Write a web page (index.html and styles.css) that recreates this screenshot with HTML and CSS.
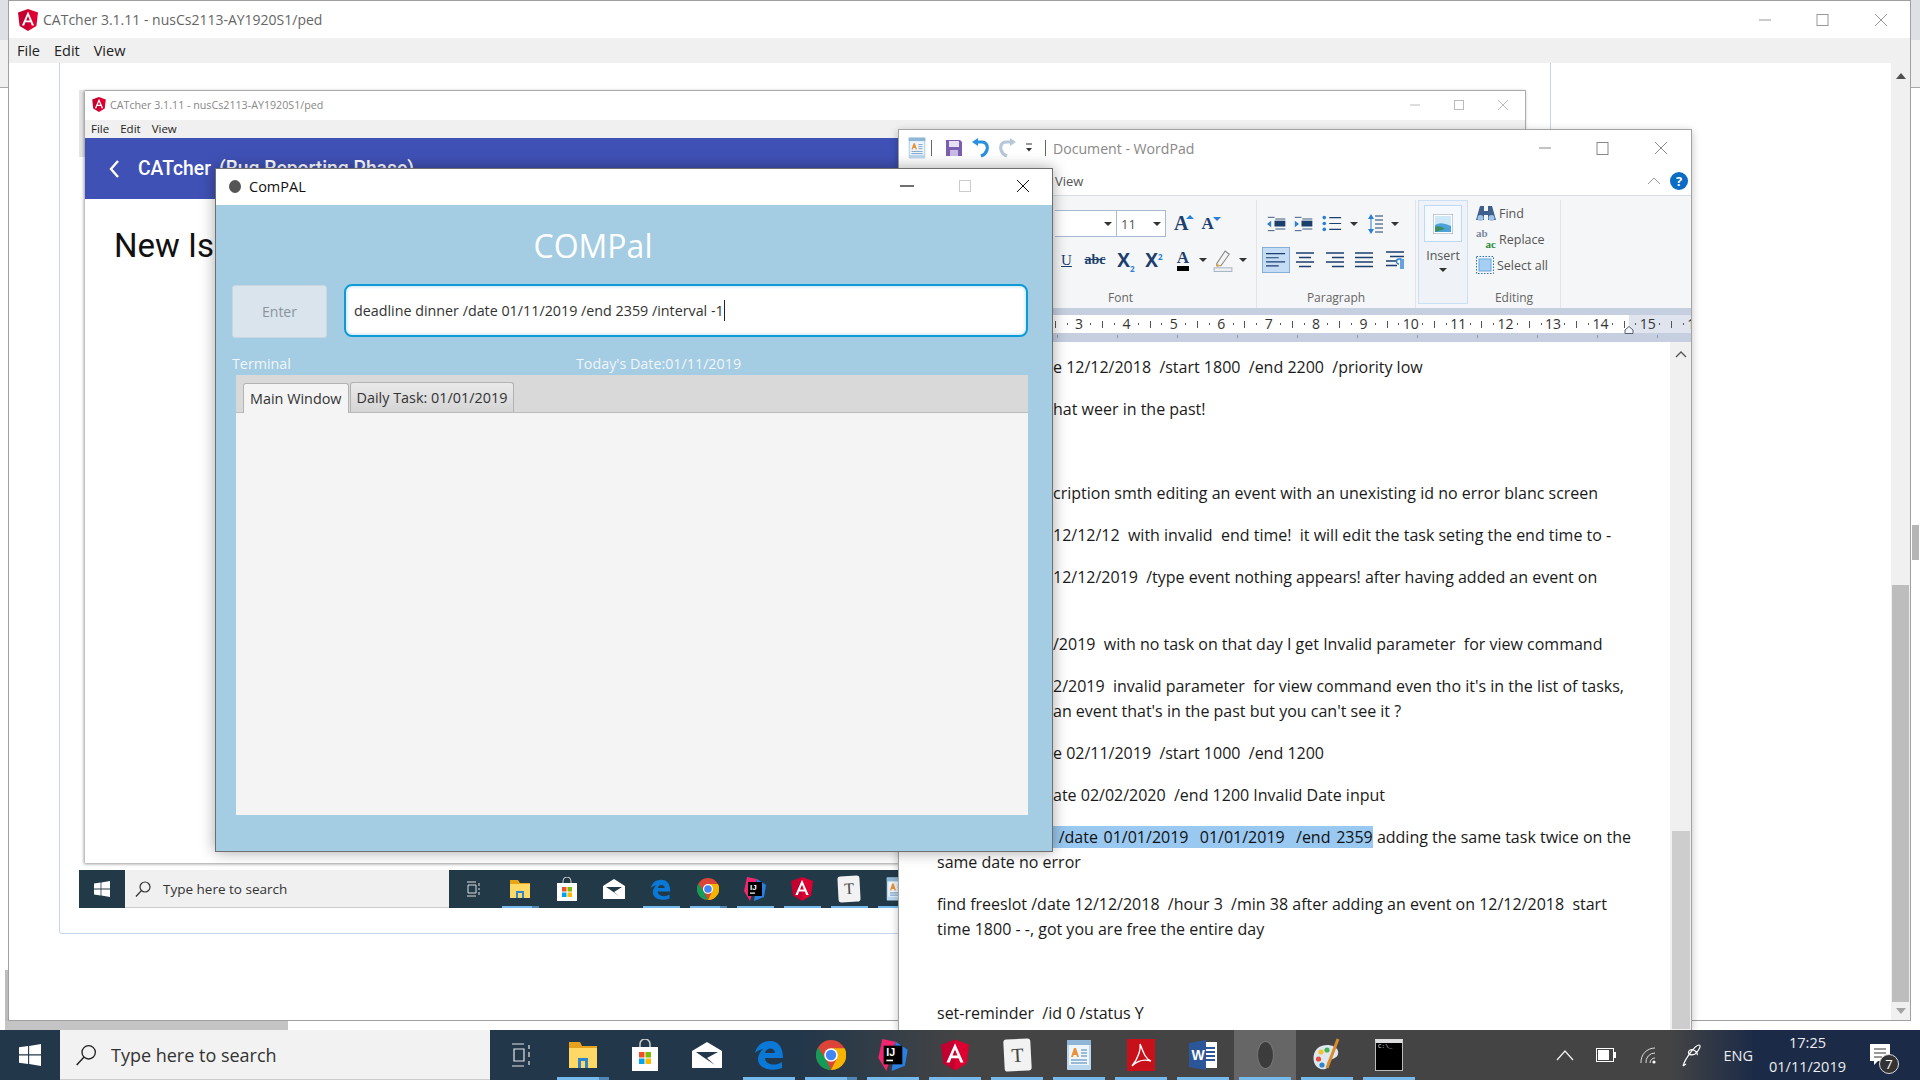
FILE: index.html
```html
<!DOCTYPE html>
<html lang="en">

<head>
    <meta charset="UTF-8">
    <title>CATcher - ComPAL - WordPad</title>
    <link rel="stylesheet" href="styles.css">
</head>

<body>
    <svg class="defs" width="0" height="0">
        <symbol id="ng" viewBox="0 0 20 22">
            <path fill="#dd0031" d="M10 0 L20 3.6 L18.4 17 L10 22 Z" />
            <path fill="#c3002f" d="M10 0 L0 3.6 L1.6 17 L10 22 Z" />
            <path fill="#fff" d="M10 2.6 L3.9 16.4 H6.2 L7.4 13.3 H12.6 L13.8 16.4 H16.1 Z M8.2 11.4 L10 7.1 L11.8 11.4 Z" />
        </symbol>
        <symbol id="wp" viewBox="0 0 26 30">
            <rect x="1" y="0" width="24" height="30" rx="1" fill="#bcd8ee" />
            <rect x="3" y="5" width="20" height="20" fill="#eef5fb" />
            <rect x="1" y="0" width="24" height="5" fill="#8fb6d6" />
            <path fill="#e8923a" d="M5 17 L8 8 H10 L13 17 H11 L10.4 15 H7.6 L7 17 Z" />
            <path stroke="#7fa8cc" stroke-width="1.4" d="M15 10 H21 M15 13 H21 M15 16 H21 M5 20 H21 M5 23 H21" />
        </symbol>
        <symbol id="edge" viewBox="0 0 30 30">
            <path fill="#0a78d7" fill-rule="evenodd" d="M1 13 C3 5 9 1 16 1 C25 1 29 8 29 18 H11 C11 24 20 27 28 22 V28 C18 32 4 29 4 19 C4 15 6 12 9 9 C5 10 3 11 1 13 Z M11 13 H21 C21 7 12 7 11 13 Z" />
        </symbol>
    </svg>

    <!-- big catcher window at the back -->
    <div class="back-strip"></div>
    <div class="far-thumb"></div>
    <div class="left-shade"></div>
    <div class="app-win">
        <div class="titlebar">
            <svg class="ng-big" width="20" height="22"><use href="#ng" /></svg>
            <span class="title-text">CATcher 3.1.11 - nusCs2113-AY1920S1/ped</span>
            <div class="win-btns">
                <svg width="36" height="20" viewBox="0 0 36 20"><path d="M12 10 H24" stroke="#999" stroke-width="1" /></svg>
                <svg width="36" height="20" viewBox="0 0 36 20"><rect x="12" y="4.5" width="11" height="11" fill="none" stroke="#999" /></svg>
                <svg width="36" height="20" viewBox="0 0 36 20"><path d="M12 4 L24 16 M24 4 L12 16" stroke="#999" /></svg>
            </div>
        </div>
        <div class="menubar">
            <span>File</span><span>Edit</span><span>View</span>
        </div>
        <div class="app-body">
            <div class="page-scroll">
                <div class="arrow-up"></div>
                <div class="page-thumb"></div>
                <div class="arrow-down"></div>
            </div>
        </div>
    </div>
    <div class="h-strip"></div>

    <div class="card"></div>

    <!-- screenshot of catcher pasted in the page -->
    <div class="inner-side"></div>
    <div class="inner-win">
        <div class="inner-title">
            <svg width="14" height="15"><use href="#ng" /></svg>
            <span>CATcher 3.1.11 - nusCs2113-AY1920S1/ped</span>
            <div class="inner-btns">
                <svg width="12" height="12" viewBox="0 0 12 12"><path d="M1 6 H11" stroke="#bbb" /></svg>
                <svg width="12" height="12" viewBox="0 0 12 12"><rect x="1.5" y="1.5" width="9" height="9" fill="none" stroke="#bbb" /></svg>
                <svg width="12" height="12" viewBox="0 0 12 12"><path d="M1 1 L11 11 M11 1 L1 11" stroke="#bbb" /></svg>
            </div>
        </div>
        <div class="inner-menu">
            <span>File</span><span>Edit</span><span>View</span>
        </div>
        <div class="inner-head">
            <svg width="12" height="20" viewBox="0 0 12 20"><path d="M10 2 L3 10 L10 18" fill="none" stroke="#fff" stroke-width="2.4" /></svg>
            <span class="inner-brand">CATcher</span>
            <span class="inner-phase">(Bug Reporting Phase)</span>
        </div>
        <h1 class="inner-h1">New Issue</h1>
    </div>

    <div class="mini-taskbar">
        <div class="mini-start">
            <svg width="16" height="16" viewBox="0 0 16 16"><path fill="#fff" d="M0 2.4 L6.6 1.5 V7.5 H0 Z M7.4 1.4 L16 0 V7.5 H7.4 Z M0 8.4 H6.6 V14.5 L0 13.6 Z M7.4 8.4 H16 V16 L7.4 14.6 Z" /></svg>
        </div>
        <div class="mini-search">
            <svg width="16" height="18" viewBox="0 0 16 18"><circle cx="10" cy="7" r="5" fill="none" stroke="#333" stroke-width="1.2" /><path d="M6.4 10.6 L1 16.5" stroke="#333" stroke-width="1.3" /></svg>
            <span>Type here to search</span>
        </div>
        <div class="mini-icons">
            <div class="mini-app"><svg width="16" height="16" viewBox="0 0 16 16"><path d="M2 1 H11 M2 15 H11 M3 4 H11 V12 H3 Z M14 2 V5 M14 7 V9 M14 11 V14" fill="none" stroke="#ddd" /></svg></div>
            <div class="mini-app on stack"><svg width="22" height="22" viewBox="0 0 22 22"><path fill="#e8a317" d="M1 2 H9 L11 5 H21 V19 H1 Z" /><path fill="#ffd966" d="M1 6 H21 V20 H1 Z" /><path fill="#2e86d1" d="M7 20 V13 H15 V20 H13 V15 H9 V20 Z" /></svg></div>
            <div class="mini-app"><svg width="22" height="24" viewBox="0 0 22 24"><path d="M7 7 V4 A4 4 0 0 1 15 4 V7" fill="none" stroke="#ccc" /><rect x="1" y="6" width="20" height="18" fill="#fff" /><rect x="6" y="10" width="4.5" height="4.5" fill="#f25022" /><rect x="11.5" y="10" width="4.5" height="4.5" fill="#7fba00" /><rect x="6" y="15.5" width="4.5" height="4.5" fill="#00a4ef" /><rect x="11.5" y="15.5" width="4.5" height="4.5" fill="#ffb900" /></svg></div>
            <div class="mini-app"><svg width="22" height="20" viewBox="0 0 22 20"><path fill="#fff" d="M11 0 L22 7 V20 H0 V7 Z" /><path fill="#223a47" d="M3 8 H19 L11 13 L17 18 L9 12 Z" /></svg></div>
            <div class="mini-app on"><svg width="21" height="23"><use href="#edge" /></svg></div>
            <div class="mini-app on stack"><svg width="22" height="22" viewBox="0 0 22 22"><circle cx="11" cy="11" r="11" fill="#db4437" /><path fill="#0f9d58" d="M11 22 A11 11 0 0 1 1.5 5.5 L7 14 Z" /><path fill="#f4b400" d="M11 6 H21 A11 11 0 0 1 11 22 L15 14 Z" /><circle cx="11" cy="11" r="5" fill="#fff" /><circle cx="11" cy="11" r="3.8" fill="#4285f4" /></svg></div>
            <div class="mini-app on"><svg width="22" height="24" viewBox="0 0 22 24"><path fill="#f0266f" d="M3 0 L13 2 L6 24 L0 14 Z" /><path fill="#2b7fe0" d="M13 2 L22 8 L20 20 L10 24 Z" /><rect x="4" y="5" width="14" height="14" fill="#000" /><text x="6" y="13" class="ij">IJ</text><rect x="6" y="15.5" width="5" height="1.2" fill="#fff" /></svg></div>
            <div class="mini-app on"><svg width="22" height="24"><use href="#ng" /></svg></div>
            <div class="mini-app on"><div class="t-tile small-t">T</div></div>
            <div class="mini-app on"><svg width="20" height="24"><use href="#wp" /></svg></div>
        </div>
    </div>

    <!-- wordpad window -->
    <div class="wordpad">
        <div class="wp-title">
            <svg class="wp-app" width="18" height="22"><use href="#wp" /></svg>
            <span class="wp-sep"></span>
            <svg class="qa-save" width="18" height="18" viewBox="0 0 18 18"><path fill="#7a5fb0" d="M1 1 H15 L17 3 V17 H1 Z" /><rect x="4" y="2" width="10" height="6" fill="#e6e0f2" /><rect x="5" y="11" width="8" height="6" fill="#c9bbe4" /></svg>
            <svg class="qa-undo" width="18" height="20" viewBox="0 0 18 20"><path d="M4 4 H10 C15 4 16 9 15 12 C14 15 12 17 9 18" fill="none" stroke="#2a8fdc" stroke-width="3.2" /><path fill="#2a8fdc" d="M0 4 L6 0 V8 Z" /></svg>
            <svg class="qa-redo" width="18" height="20" viewBox="0 0 18 20"><path d="M14 4 H8 C3 4 2 9 3 12 C4 15 6 17 9 18" fill="none" stroke="#b5c7d8" stroke-width="3.2" /><path fill="#b5c7d8" d="M18 4 L12 0 V8 Z" /></svg>
            <svg class="qa-more" width="8" height="10" viewBox="0 0 8 10"><path d="M1 1 H7" stroke="#333" /><path fill="#333" d="M1 5 H7 L4 8.5 Z" /></svg>
            <span class="wp-sep2"></span>
            <span class="wp-name">Document - WordPad</span>
            <div class="win-btns wp-btns">
                <svg width="36" height="20" viewBox="0 0 36 20"><path d="M12 10 H24" stroke="#888" /></svg>
                <svg width="36" height="20" viewBox="0 0 36 20"><rect x="12" y="4.5" width="11" height="12" fill="none" stroke="#888" /></svg>
                <svg width="36" height="20" viewBox="0 0 36 20"><path d="M12 4 L24 16 M24 4 L12 16" stroke="#888" /></svg>
            </div>
        </div>
        <div class="wp-tabs">
            <span class="wp-view">View</span>
            <svg class="wp-collapse" width="14" height="10" viewBox="0 0 14 10"><path d="M1 8 L7 2 L13 8" fill="none" stroke="#999" /></svg>
            <span class="wp-help">?</span>
        </div>
        <div class="ribbon">
            <div class="rib-group rib-font">
                <div class="rib-rows">
                    <div class="font-row">
                        <div class="combo combo-family"><i class="caret"></i></div>
                        <div class="combo combo-size">11<i class="caret"></i></div>
                        <span class="grow-a">A<i class="tri-up"></i></span>
                        <span class="shrink-a">A<i class="tri-down"></i></span>
                    </div>
                    <div class="font-row2">
                        <span class="u-btn">U</span>
                        <span class="abc-btn">abc</span>
                        <span class="x-btn">X<sub>2</sub></span>
                        <span class="x-btn">X<sup>2</sup></span>
                        <span class="color-a">A</span>
                        <i class="caret"></i>
                        <svg width="20" height="23" viewBox="0 0 18 22"><path d="M3 14 L11 2 L15 5 L7 16 L3 16 Z" fill="#f4f4f4" stroke="#888" /><path d="M3 14 L7 16 L3 17 Z" fill="#e8a838" /><rect x="0.5" y="18" width="17" height="3.5" fill="#f0f0f0" stroke="#a9b6c8" /></svg>
                        <i class="caret"></i>
                    </div>
                </div>
                <div class="rib-label">Font</div>
            </div>
            <div class="rib-group rib-para">
                <div class="rib-rows">
                    <div class="para-row">
                        <svg width="20" height="16" viewBox="0 0 24 18"><path d="M10 3 H22 M10 15 H22 M1 1 H9 M1 17 H9" stroke="#1c3f6e" /><rect x="9" y="5" width="13" height="7" fill="#1c3f6e" /><path fill="#2a7fd4" d="M0 9 L5 5 V13 Z" /></svg>
                        <svg width="20" height="16" viewBox="0 0 24 18"><path d="M10 3 H22 M10 15 H22 M1 1 H9 M1 17 H9" stroke="#1c3f6e" /><rect x="9" y="5" width="13" height="7" fill="#1c3f6e" /><path fill="#2a7fd4" d="M6 9 L1 5 V13 Z" /></svg>
                        <svg width="20" height="17" viewBox="0 0 22 18"><circle cx="2.5" cy="2.5" r="2" fill="#2a7fd4" /><circle cx="2.5" cy="9" r="2" fill="#2a7fd4" /><circle cx="2.5" cy="15.5" r="2" fill="#2a7fd4" /><path d="M8 2.5 H21 M8 9 H21 M8 15.5 H21" stroke="#1c3f6e" stroke-width="1.2" /></svg>
                        <i class="caret"></i>
                        <svg width="16" height="20" viewBox="0 0 16 20"><path d="M7 2 H15 M7 6 H15 M7 10 H15 M7 14 H15 M7 18 H15" stroke="#1c3f6e" /><path fill="#2a7fd4" d="M3 0 L6 5 H0 Z M3 20 L6 15 H0 Z" /><path d="M3 4 V16" stroke="#2a7fd4" /></svg>
                        <i class="caret"></i>
                    </div>
                    <div class="para-row2">
                        <span class="align-box">
                            <svg width="20" height="16" viewBox="0 0 22 16"><path d="M0 1 H21 M0 5.5 H14 M0 10 H21 M0 14.5 H14" stroke="#1c3f6e" stroke-width="1.3" /></svg>
                        </span>
                        <svg width="18" height="16" viewBox="0 0 18 16"><path d="M0 1 H18 M3 5.5 H15 M0 10 H18 M3 14.5 H15" stroke="#1c3f6e" stroke-width="1.3" /></svg>
                        <svg width="18" height="16" viewBox="0 0 18 16"><path d="M0 1 H18 M6 5.5 H18 M0 10 H18 M6 14.5 H18" stroke="#1c3f6e" stroke-width="1.3" /></svg>
                        <svg width="18" height="16" viewBox="0 0 18 16"><path d="M0 1 H18 M0 5.5 H18 M0 10 H18 M0 14.5 H18" stroke="#1c3f6e" stroke-width="1.3" /></svg>
                        <svg width="18" height="18" viewBox="0 0 18 18"><path d="M0 1 H18 M4 5.5 H18 M0 10 H11 M0 14.5 H11" stroke="#1c3f6e" stroke-width="1.3" /><path d="M15 18 V8 H13 A2.5 2.5 0 0 0 13 13 M17 18 V8" fill="none" stroke="#2a7fd4" stroke-width="1.4" /></svg>
                    </div>
                </div>
                <div class="rib-label">Paragraph</div>
            </div>
            <div class="rib-group rib-insert">
                <div class="insert-top">
                    <span class="insert-pic"><svg width="20" height="20" viewBox="0 0 20 20"><rect width="20" height="20" fill="#fff" stroke="#8a9bb0" /><rect x="2" y="2" width="16" height="16" fill="#cfe8f7" /><path fill="#4da3d9" d="M2 11 Q8 7 18 12 V18 H2 Z" /><path fill="#3a8f5c" d="M2 13 Q7 11 12 15 L2 18 Z" /></svg></span>
                </div>
                <span class="insert-text">Insert</span>
                <i class="caret"></i>
            </div>
            <div class="rib-group rib-edit">
                <div class="edit-list">
                    <div class="edit-item">
                        <svg width="20" height="17" viewBox="0 0 20 17"><path fill="#3f5f8f" d="M4 1 H8 V6 H12 V1 H16 L20 15 H12 V10 H8 V15 H0 Z" /><circle cx="4.5" cy="13" r="3" fill="#9fc3e6" /><circle cx="15.5" cy="13" r="3" fill="#9fc3e6" /></svg>
                        <span>Find</span>
                    </div>
                    <div class="edit-item">
                        <span class="ab-ac"><b class="ab">ab</b><b class="ac">ac</b></span>
                        <span>Replace</span>
                    </div>
                    <div class="edit-item">
                        <svg width="18" height="18" viewBox="0 0 18 18"><rect x="0.5" y="0.5" width="17" height="17" fill="none" stroke="#2a6fb8" stroke-dasharray="1.5 1.5" /><rect x="3" y="3" width="12" height="12" fill="#a6d0f3" stroke="#6ca6dc" /></svg>
                        <span>Select all</span>
                    </div>
                </div>
                <div class="rib-label">Editing</div>
            </div>
        </div>
        <div class="ruler-band">
            <div class="ruler">
                <span>2</span><span>3</span><span>4</span><span>5</span><span>6</span><span>7</span><span>8</span><span>9</span><span>10</span><span>11</span><span>12</span><span>13</span><span>14</span><span>15</span><span>16</span>
                <svg class="ruler-mark" width="10" height="8" viewBox="0 0 10 8"><path d="M1 7.5 V4 L5 0.5 L9 4 V7.5 Z" fill="#f4f6fa" stroke="#55606f" /></svg>
            </div>
        </div>
        <div class="doc">
            <div class="doc-text">
                <p class="cut">e 12/12/2018 &nbsp;/start 1800 &nbsp;/end 2200 &nbsp;/priority low</p>
                <p class="cut">hat weer in the past!</p>
                <p class="blank"></p>
                <p class="cut">cription smth editing an event with an unexisting id no error blanc screen</p>
                <p class="cut">12/12/12 &nbsp;with invalid &nbsp;end time! &nbsp;it will edit the task seting the end time to -</p>
                <p class="cut">12/12/2019 &nbsp;/type event nothing appears! after having added an event on</p>
                <p class="blank tight"></p>
                <p class="cut">/2019 &nbsp;with no task on that day I get Invalid parameter &nbsp;for view command</p>
                <p class="cut tight">2/2019 &nbsp;invalid parameter &nbsp;for view command even tho it's in the list of tasks,</p>
                <p class="cut">an event that's in the past but you can't see it ?</p>
                <p class="cut">e 02/11/2019 &nbsp;/start 1000 &nbsp;/end 1200</p>
                <p class="cut">ate 02/02/2020 &nbsp;/end 1200 Invalid Date input</p>
                <p class="cut tight"><mark>&nbsp;/date 01/01/2019 &nbsp;01/01/2019 &nbsp;/end 2359</mark> adding the same task twice on the</p>
                <p>same date no error</p>
                <p class="tight">find freeslot /date 12/12/2018 &nbsp;/hour 3 &nbsp;/min 38 after adding an event on 12/12/2018 &nbsp;start</p>
                <p>time 1800 - -, got you are free the entire day</p>
                <p class="blank"></p>
                <p>set-reminder &nbsp;/id 0 /status Y</p>
            </div>
            <div class="doc-scroll">
                <svg width="12" height="8" viewBox="0 0 12 8"><path d="M1 7 L6 2 L11 7" fill="none" stroke="#555" stroke-width="1.4" /></svg>
                <div class="doc-thumb"></div>
            </div>
        </div>
    </div>

    <!-- compal on top -->
    <div class="compal">
        <div class="cp-title">
            <span class="cp-icon"></span>
            <span>ComPAL</span>
            <div class="cp-btns">
                <svg width="14" height="14" viewBox="0 0 14 14"><path d="M0 7 H14" stroke="#111" stroke-width="1.2" /></svg>
                <svg width="14" height="14" viewBox="0 0 14 14"><rect x="1.5" y="1.5" width="11" height="11" fill="none" stroke="#ccc" /></svg>
                <svg width="14" height="14" viewBox="0 0 14 14"><path d="M1 1 L13 13 M13 1 L1 13" stroke="#111" /></svg>
            </div>
        </div>
        <div class="cp-body">
            <div class="cp-head">COMPal</div>
            <div class="cp-input-row">
                <button class="cp-enter">Enter</button>
                <div class="cp-input">deadline dinner /date 01/11/2019 /end 2359 /interval -1<i class="cursor"></i></div>
            </div>
            <div class="cp-labels">
                <span class="lbl-term">Terminal</span>
                <span>Today's Date:01/11/2019</span>
            </div>
            <div class="tab-pane">
                <div class="tab-head">
                    <span class="tab tab-on">Main Window</span>
                    <span class="tab">Daily Task: 01/01/2019</span>
                </div>
                <div class="tab-body"></div>
            </div>
        </div>
    </div>

    <!-- windows taskbar -->
    <div class="taskbar">
        <div class="tb-start">
            <svg width="22" height="22" viewBox="0 0 16 16"><path fill="#fff" d="M0 2.4 L6.6 1.5 V7.5 H0 Z M7.4 1.4 L16 0 V7.5 H7.4 Z M0 8.4 H6.6 V14.5 L0 13.6 Z M7.4 8.4 H16 V16 L7.4 14.6 Z" /></svg>
        </div>
        <div class="tb-search">
            <svg width="22" height="24" viewBox="0 0 16 18"><circle cx="10" cy="7" r="5" fill="none" stroke="#222" stroke-width="1" /><path d="M6.4 10.6 L1 16.5" stroke="#222" stroke-width="1.1" /></svg>
            <span>Type here to search</span>
        </div>
        <div class="tb-apps">
            <div class="tb-app"><svg width="20" height="24" viewBox="0 0 20 24"><path d="M1 1 H13 M1 23 H13 M3 6 H13 V18 H3 Z M18 2 V6 M18 9 V14 M18 18 V22" fill="none" stroke="#e4e4e4" stroke-width="1.2" /></svg></div>
            <div class="tb-app line-stack"><svg width="28" height="26" viewBox="0 0 28 26"><path fill="#e6a21c" d="M0 0 H11 L13 4 H28 V24 H0 Z" /><path fill="#ffd866" d="M0 6 H28 V26 H0 Z" /><path fill="#2f84cc" d="M9 26 V16 H19 V26 H16 V19 H12 V26 Z" /></svg></div>
            <div class="tb-app"><svg width="28" height="32" viewBox="0 0 28 32"><path d="M9 10 V5 A5 5 0 0 1 19 5 V10" fill="none" stroke="#cfcfcf" stroke-width="1.5" /><rect x="1" y="8" width="26" height="24" fill="#fff" /><rect x="8" y="13" width="5.5" height="5.5" fill="#f25022" /><rect x="14.5" y="13" width="5.5" height="5.5" fill="#7fba00" /><rect x="8" y="19.5" width="5.5" height="5.5" fill="#00a4ef" /><rect x="14.5" y="19.5" width="5.5" height="5.5" fill="#ffb900" /></svg></div>
            <div class="tb-app"><svg width="30" height="26" viewBox="0 0 30 26"><path fill="#fff" d="M15 0 L30 9 V26 H0 V9 Z" /><path fill="#22374a" d="M4 10 H26 L15 16 L23 23 L11 15 Z" /></svg></div>
            <div class="tb-app line"><svg width="30" height="32"><use href="#edge" /></svg></div>
            <div class="tb-app line-stack"><svg width="30" height="30" viewBox="0 0 22 22"><circle cx="11" cy="11" r="11" fill="#db4437" /><path fill="#0f9d58" d="M11 22 A11 11 0 0 1 1.5 5.5 L7 14 Z" /><path fill="#f4b400" d="M11 6 H21 A11 11 0 0 1 11 22 L15 14 Z" /><circle cx="11" cy="11" r="5" fill="#fff" /><circle cx="11" cy="11" r="3.8" fill="#4285f4" /></svg></div>
            <div class="tb-app line"><svg width="30" height="32" viewBox="0 0 22 24"><path fill="#f0266f" d="M3 0 L13 2 L6 24 L0 14 Z" /><path fill="#2b7fe0" d="M13 2 L22 8 L20 20 L10 24 Z" /><rect x="4" y="5" width="14" height="14" fill="#000" /><text x="6" y="13" class="ij">IJ</text><rect x="6" y="15.5" width="5" height="1.2" fill="#fff" /></svg></div>
            <div class="tb-app line"><svg width="28" height="32"><use href="#ng" /></svg></div>
            <div class="tb-app line"><div class="t-tile">T</div></div>
            <div class="tb-app line"><svg width="26" height="34"><use href="#wp" /></svg></div>
            <div class="tb-app line"><svg width="28" height="32" viewBox="0 0 28 32"><rect width="28" height="32" fill="#c8101a" /><path d="M5 27 C11 20 14 10 13 5 C16 12 18 20 24 22 C17 20 10 22 5 27 Z" fill="none" stroke="#fff" stroke-width="1.4" /></svg></div>
            <div class="tb-app line"><svg width="28" height="30" viewBox="0 0 28 30"><rect x="10" y="2" width="18" height="26" fill="#fff" /><path d="M16 8 H26 M16 12 H26 M16 16 H26 M16 20 H26" stroke="#2b579a" stroke-width="2" /><path fill="#2b579a" d="M0 3 L17 0 V30 L0 27 Z" /><text x="2.5" y="20" class="word-w">W</text></svg></div>
            <div class="tb-app line tb-active"><span class="cp-disc"></span></div>
            <div class="tb-app line"><svg width="30" height="34" viewBox="0 0 30 34"><path fill="#dfe7ef" d="M15 7 C4 7 0 16 2 24 C4 31 12 33 15 30 C18 27 13 24 18 22 C24 20 27 18 26 13 C25 9 20 7 15 7 Z" /><circle cx="9" cy="14" r="2.6" fill="#f4c430" /><circle cx="6.5" cy="21" r="2.6" fill="#e74c3c" /><circle cx="15" cy="12" r="2.6" fill="#4caf50" /><circle cx="10" cy="27" r="2.6" fill="#2f84cc" /><path d="M26 1 L15 30" stroke="#d98a2b" stroke-width="3" /></svg></div>
            <div class="tb-app line"><div class="cmd-box"><span>C:\_</span></div></div>
        </div>
        <div class="tb-tray">
            <svg width="18" height="12" viewBox="0 0 18 12"><path d="M1 11 L9 2 L17 11" fill="none" stroke="#eee" stroke-width="1.3" /></svg>
            <svg width="20" height="14" viewBox="0 0 20 14"><rect x="0.5" y="0.5" width="17" height="13" fill="none" stroke="#fff" /><rect x="2" y="2" width="11" height="10" fill="#fff" /><rect x="18" y="4" width="2" height="6" fill="#fff" /></svg>
            <svg width="18" height="18" viewBox="0 0 18 18"><path d="M2 17 A14 14 0 0 1 16 2 M7 17 A9 9 0 0 1 16 7 M11 17 A5 5 0 0 1 16 12" fill="none" stroke="#ddd" /><circle cx="15" cy="16" r="1.6" fill="#fff" /></svg>
            <svg width="22" height="24" viewBox="0 0 22 24"><path d="M2 23 C4 16 14 2 18 2 C21 2 17 9 14 11 C10 13 6 11 8 8 C11 4 18 10 16 12 M2 23 L5 21" fill="none" stroke="#fff" stroke-width="1.2" /></svg>
            <span class="tb-lang">ENG</span>
            <div class="tb-clock"><span>17:25</span><span>01/11/2019</span></div>
            <div class="tb-notif">
                <svg width="20" height="22" viewBox="0 0 20 22"><path fill="#fff" d="M0 0 H20 V17 H8 L4 21 V17 H0 Z" /><path d="M4 5 H16 M4 9 H16 M4 13 H12" stroke="#333" /></svg>
                <span class="notif-count">7</span>
            </div>
        </div>
    </div>
</body>

</html>
```

FILE: styles.css
```css
* {
    margin: 0;
    padding: 0;
    box-sizing: border-box;
}

body {
    width: 1920px;
    height: 1080px;
    position: relative;
    overflow: hidden;
    background: #fff;
    font-family: "Open Sans", "Noto Sans", sans-serif;
    color: #222;
}

.defs {
    position: absolute;
}

i {
    display: inline-block;
}

.caret {
    width: 0;
    height: 0;
    border-left: 4px solid transparent;
    border-right: 4px solid transparent;
    border-top: 4px solid #333;
}

/* back of the desktop */
.back-strip {
    position: absolute;
    left: 0;
    top: 0;
    width: 1920px;
    height: 88px;
    background: linear-gradient(#dfe0e6 0 40px, #f0f0f0 40px);
    border-bottom: 1px solid #aaa;
}

.far-thumb {
    position: absolute;
    left: 1912px;
    top: 525px;
    width: 7px;
    height: 35px;
    background: #b5b5b5;
}

.left-shade {
    position: absolute;
    left: 5px;
    top: 970px;
    width: 3px;
    height: 60px;
    background: #bcbcbc;
}

.h-strip {
    position: absolute;
    left: 5px;
    top: 1021px;
    width: 283px;
    height: 9px;
    background: #c4c4c4;
}

.app-win {
    position: absolute;
    left: 8px;
    top: 0;
    width: 1903px;
    height: 1021px;
    background: #fff;
    border: 1px solid #a0a0a0;
    display: flex;
    flex-direction: column;
}

.titlebar {
    height: 37px;
    display: flex;
    align-items: center;
    padding-left: 9px;
    font-size: 14px;
    color: #666;
}

.ng-big {
    margin-right: 5px;
}

.win-btns {
    margin-left: auto;
    display: flex;
    gap: 22px;
    padding-right: 11px;
}

.menubar {
    height: 25px;
    background: #f0f0f0;
    display: flex;
    align-items: center;
    gap: 14px;
    padding-left: 8px;
    font-size: 14.5px;
    color: #222;
}

.app-body {
    flex: 1;
    display: flex;
    justify-content: flex-end;
}

.page-scroll {
    width: 19px;
    background: #f0f0f0;
    display: flex;
    flex-direction: column;
    align-items: center;
    padding-top: 10px;
}

.arrow-up {
    border-left: 5px solid transparent;
    border-right: 5px solid transparent;
    border-bottom: 6px solid #505050;
}

.page-thumb {
    margin-top: 506px;
    width: 17px;
    height: 417px;
    background: #bdbdbd;
}

.arrow-down {
    margin-top: 6px;
    border-left: 5px solid transparent;
    border-right: 5px solid transparent;
    border-top: 6px solid #a3a3a3;
}

.card {
    position: absolute;
    left: 59px;
    top: 63px;
    width: 1492px;
    height: 871px;
    border: 1px solid #c5d5ee;
    border-top: 0;
    border-radius: 0 0 3px 3px;
}

/* pasted screenshot */
.inner-side {
    position: absolute;
    left: 79px;
    top: 90px;
    width: 6px;
    height: 67px;
    background: #e4e4e4;
}

.inner-win {
    position: absolute;
    left: 85px;
    top: 90px;
    width: 1441px;
    height: 773px;
    background: #fff;
    border-top: 1px solid #aaa;
    border-right: 1px solid #aaa;
    box-shadow: -1px 1px 3px rgba(0, 0, 0, .4);
    overflow: hidden;
}

.inner-title {
    height: 29px;
    display: flex;
    align-items: center;
    gap: 4px;
    padding-left: 7px;
    padding-bottom: 2px;
    font-size: 10.7px;
    color: #888;
}

.inner-btns {
    margin-left: auto;
    display: flex;
    gap: 32px;
    padding-right: 16px;
}

.inner-menu {
    height: 18px;
    background: #f0f0f0;
    display: flex;
    align-items: center;
    gap: 11px;
    padding-left: 6px;
    padding-bottom: 2px;
    font-size: 11.5px;
    color: #222;
}

.inner-head {
    height: 61px;
    background: #3f51b5;
    color: #fff;
    display: flex;
    align-items: center;
    gap: 12px;
    padding-left: 23px;
    font-family: Roboto, sans-serif;
    font-weight: 500;
    font-size: 19.3px;
}

.inner-brand {
    margin-left: 6px;
}

.inner-phase {
    margin-left: -4px;
}

.inner-h1 {
    font-family: Roboto, sans-serif;
    font-weight: 400;
    font-size: 33px;
    padding: 27px 0 0 29px;
    color: #111;
}

.mini-taskbar {
    position: absolute;
    left: 79px;
    top: 870px;
    width: 830px;
    height: 38px;
    background: #223a47;
    display: flex;
    overflow: hidden;
}

.mini-start {
    flex: none;
    width: 46px;
    display: flex;
    align-items: center;
    justify-content: center;
}

.mini-search {
    flex: none;
    width: 324px;
    background: #f0f0f0;
    border-bottom: 1px solid #ccc;
    display: flex;
    align-items: center;
    gap: 12px;
    padding-left: 10px;
    font-size: 13.5px;
    color: #333;
}

.mini-icons {
    flex: none;
    display: flex;
}

.mini-app {
    width: 47px;
    height: 38px;
    position: relative;
    display: flex;
    align-items: center;
    justify-content: center;
}

.mini-app.on::after {
    content: "";
    position: absolute;
    left: 6px;
    right: 4px;
    bottom: 0;
    height: 2px;
    background: #76b9ed;
}

.mini-app.stack::after {
    background: linear-gradient(90deg, #76b9ed 80%, #4f86b3 80%);
}

.ij {
    font-family: "Liberation Sans", sans-serif;
    font-weight: 700;
    font-size: 8px;
    fill: #fff;
}

.t-tile {
    width: 27px;
    height: 32px;
    background: #f2f2f2;
    border-radius: 3px;
    transform: rotate(-3deg);
    text-align: center;
    font-family: "Liberation Serif", serif;
    font-size: 20px;
    line-height: 32px;
    color: #444;
}

.small-t {
    width: 22px;
    height: 26px;
    font-size: 16px;
    line-height: 26px;
}

/* wordpad */
.wordpad {
    position: absolute;
    left: 898px;
    top: 129px;
    width: 794px;
    height: 901px;
    background: #fff;
    border: 1px solid #a3a3a3;
    border-bottom: 0;
    box-shadow: 0 2px 8px rgba(0, 0, 0, .25);
    display: flex;
    flex-direction: column;
}

.wp-title {
    height: 35px;
    display: flex;
    align-items: center;
    padding-left: 9px;
    padding-top: 1px;
    font-size: 14.1px;
    color: #888;
}

.wp-sep,
.wp-sep2 {
    width: 1px;
    height: 16px;
    background: #666;
}

.wp-sep {
    margin: 0 13px 0 5px;
}

.qa-save {
    margin-right: 9px;
}

.qa-undo {
    margin-right: 8px;
}

.qa-redo {
    margin-right: 9px;
}

.wp-sep2 {
    margin: 0 7px 0 12px;
}

.wp-btns {
    gap: 22px;
    padding-right: 12px;
}

.wp-tabs {
    height: 31px;
    border-bottom: 1px solid #d8dde6;
    display: flex;
    align-items: center;
    padding-left: 156px;
    padding-right: 3px;
    padding-top: 2px;
    font-size: 13px;
    color: #555;
}

.wp-collapse {
    margin-left: auto;
    margin-right: 9px;
}

.wp-help {
    width: 18px;
    height: 18px;
    border-radius: 50%;
    background: #0a6cc4;
    color: #fff;
    font-weight: 700;
    font-size: 13px;
    line-height: 18px;
    text-align: center;
}

.ribbon {
    height: 112px;
    background: #f5f6f7;
    display: flex;
    font-size: 12px;
    color: #555;
    padding-top: 4px;
}

.rib-group {
    display: flex;
    flex-direction: column;
    border-right: 1px solid #e2e4e7;
    position: relative;
}

.rib-rows {
    flex: 1;
}

.rib-label {
    height: 20px;
    line-height: 20px;
    text-align: center;
    color: #666;
}

.rib-font {
    width: 358px;
    padding-left: 156px;
}

.rib-font .rib-label {
    margin-left: -70px;
}

.font-row {
    height: 27px;
    margin-top: 10px;
    display: flex;
    align-items: center;
}

.combo {
    height: 27px;
    background: #fff;
    border: 1px solid #a9b9d3;
    display: flex;
    align-items: center;
    justify-content: space-between;
    padding: 0 4px;
    font-size: 13px;
}

.combo-family {
    width: 62px;
    justify-content: flex-end;
    border-left: 0;
}

.combo-size {
    width: 49px;
    border-left: 0;
}

.grow-a,
.shrink-a {
    position: relative;
    font-family: "Liberation Serif", serif;
    color: #1c3f6e;
    font-weight: 700;
}

.grow-a {
    font-size: 20px;
    margin-left: 8px;
}

.shrink-a {
    font-size: 17px;
    margin-left: 13px;
}

.tri-up,
.tri-down {
    position: absolute;
    left: 12px;
    top: 3px;
    width: 0;
    height: 0;
    border-left: 4px solid transparent;
    border-right: 4px solid transparent;
}

.tri-up {
    border-bottom: 4px solid #2a7fd4;
}

.tri-down {
    border-top: 4px solid #2a7fd4;
}

.font-row2 {
    margin-top: 10px;
    display: grid;
    grid-template-columns: 23px 34px 28px 28px 30px 10px 30px 10px;
    justify-items: center;
    align-items: center;
    height: 26px;
    color: #1c3f6e;
}

.u-btn {
    font-family: "Liberation Serif", serif;
    font-size: 15px;
    text-decoration: underline;
}

.abc-btn {
    font-family: "Liberation Serif", serif;
    font-weight: 700;
    font-size: 14px;
    text-decoration: line-through;
}

.x-btn {
    font-weight: 700;
    font-size: 19px;
    line-height: 20px;
}

.x-btn sub,
.x-btn sup {
    font-size: 8px;
    line-height: 0;
    color: #2a7fd4;
}

.color-a {
    font-family: "Liberation Serif", serif;
    font-weight: 700;
    font-size: 17px;
    line-height: 17px;
    border-bottom: 5px solid #000;
}

.rib-para {
    width: 159px;
}

.para-row {
    height: 27px;
    margin-top: 10px;
    padding-left: 7px;
    display: grid;
    grid-template-columns: 26px 27px 30px 14px 29px 10px;
    justify-items: center;
    align-items: center;
}

.para-row2 {
    margin-top: 10px;
    padding-left: 5px;
    display: grid;
    grid-template-columns: 28px 30px 30px 28px 34px;
    justify-items: center;
    align-items: center;
}

.align-box {
    width: 28px;
    height: 26px;
    background: #c4dcf4;
    border: 1px solid #86afd9;
    display: flex;
    align-items: center;
    justify-content: center;
}

.rib-insert {
    width: 50px;
    margin-left: 2px;
    align-items: center;
    background: #eff2f6;
    border: 1px solid #c9e0f5;
    height: 104px;
}

.insert-top {
    width: 100%;
    padding: 4px 5px 0;
}

.insert-pic {
    height: 37px;
    background: #f5f9fd;
    border: 1px solid #bcdaf5;
    display: flex;
    align-items: center;
    justify-content: center;
}

.insert-text {
    margin-top: 5px;
    margin-bottom: 4px;
    font-size: 12.5px;
}

.rib-edit {
    width: 93px;
}

.edit-list {
    flex: 1;
    display: flex;
    flex-direction: column;
    gap: 6px;
    padding: 3px 0 0 8px;
}

.edit-item {
    height: 20px;
    display: flex;
    align-items: center;
    gap: 3px;
    font-size: 12.5px;
}

.ab-ac {
    width: 20px;
    height: 22px;
    display: flex;
    flex-direction: column;
    font-family: "Liberation Serif", serif;
    font-size: 11px;
    line-height: 11px;
}

.ab {
    color: #7a8aa0;
}

.ac {
    color: #2a8a3c;
    text-align: right;
}

.ruler-band {
    height: 34px;
    padding-top: 7px;
    overflow: hidden;
    background-color: #c6cfe0;
    background-image: repeating-linear-gradient(90deg, transparent 0 38px, #8f9bb0 38px 39px, transparent 39px 60px);
    background-size: 100% 3px;
    background-position: 0 27px;
    background-repeat: no-repeat;
}

.ruler {
    position: relative;
    height: 18px;
    width: 793px;
    background-image:
        repeating-linear-gradient(90deg, transparent 0 13.6px, #555 13.6px 14.6px, transparent 14.6px 47.4px),
        repeating-linear-gradient(90deg, transparent 0 1.75px, #555 1.75px 2.75px, transparent 2.75px 23.7px),
        linear-gradient(90deg, #fff 730px, #dfe4ee 730px);
    background-size: 100% 7px, 100% 2px, 100% 100%;
    background-position: 0 center, 0 center, 0 0;
    background-repeat: no-repeat;
    display: flex;
    padding-left: 109px;
    font-size: 14px;
    line-height: 18px;
    color: #333;
}

.ruler span {
    flex: none;
    width: 47.4px;
    text-align: center;
}

.ruler-mark {
    position: absolute;
    left: 725px;
    top: 11px;
}

.doc {
    flex: 1;
    min-height: 0;
    display: flex;
    overflow: hidden;
}

.doc-text {
    flex: 1;
    padding: 13px 0 0 38px;
    font-size: 16px;
    line-height: 25px;
    color: #1a1a1a;
    white-space: nowrap;
    overflow: hidden;
}

.doc-text p {
    height: 25px;
    margin-bottom: 17px;
}

.doc-text .tight {
    margin-bottom: 0;
}

.doc-text .cut {
    padding-left: 116px;
}

mark {
    background: #99c8f0;
    color: #111;
    word-spacing: 1.5px;
}

.doc-scroll {
    width: 21px;
    background: #f0f0f0;
    display: flex;
    flex-direction: column;
    align-items: center;
    padding-top: 8px;
}

.doc-thumb {
    margin-top: 473px;
    width: 18px;
    height: 198px;
    background: #cdcdcd;
}

/* compal */
.compal {
    position: absolute;
    left: 215px;
    top: 168px;
    width: 838px;
    height: 684px;
    background: #a4cce2;
    border: 1px solid #6f6f6f;
    box-shadow: 0 0 14px rgba(0, 0, 0, .35);
    display: flex;
    flex-direction: column;
}

.cp-title {
    height: 36px;
    background: #fff;
    display: flex;
    align-items: center;
    gap: 8px;
    padding-left: 13px;
    padding-bottom: 2px;
    font-size: 14.5px;
    color: #111;
}

.cp-icon {
    width: 12px;
    height: 13px;
    border-radius: 50%;
    background: #555;
}

.cp-btns {
    margin-left: auto;
    display: flex;
    gap: 44px;
    padding-right: 22px;
}

.cp-body {
    flex: 1;
    display: flex;
    flex-direction: column;
    padding: 0 16px 0 16px;
}

.cp-head {
    height: 80px;
    padding-top: 19px;
    text-align: center;
    margin-left: -82px;
    font-size: 32px;
    line-height: 44px;
    color: #fff;
    font-family: "Open Sans", sans-serif;
}

.cp-input-row {
    display: flex;
    align-items: flex-start;
    gap: 17px;
}

.cp-enter {
    width: 95px;
    height: 53px;
    background: #d9e4ec;
    border: 1px solid #c9d7e2;
    border-radius: 3px;
    font-family: inherit;
    font-size: 14px;
    color: #8a949c;
}

.cp-input {
    width: 684px;
    height: 53px;
    margin-top: -1px;
    background: #fff;
    border: 2px solid #0d9ad6;
    border-radius: 8px;
    box-shadow: inset 0 0 2px 2px #dff0f8;
    display: flex;
    align-items: center;
    padding-left: 8px;
    font-size: 14.3px;
    color: #333;
}

.cursor {
    width: 1px;
    height: 21px;
    background: #222;
}

.cp-labels {
    height: 37px;
    padding-top: 16px;
    display: flex;
    font-size: 14.3px;
    line-height: 20px;
    color: #f0f6fa;
}

.lbl-term {
    width: 344px;
}

.tab-pane {
    width: 792px;
    margin-left: 4px;
    height: 440px;
    display: flex;
    flex-direction: column;
    background: #f4f4f4;
}

.tab-head {
    height: 38px;
    background: #d9d9d9;
    border-bottom: 1px solid #bbb;
    display: flex;
    align-items: flex-end;
    gap: 1px;
    padding-left: 7px;
}

.tab {
    height: 30px;
    padding: 0 6px;
    background: linear-gradient(#e9e9e9, #d5d5d5);
    border: 1px solid #b3b3b3;
    border-bottom: 0;
    border-radius: 3px 3px 0 0;
    font-size: 14.4px;
    line-height: 29px;
    color: #333;
}

.tab-on {
    background: #f4f4f4;
    margin-bottom: -1px;
}

.tab-body {
    flex: 1;
}

/* taskbar */
.taskbar {
    position: absolute;
    left: 0;
    top: 1030px;
    width: 1920px;
    height: 50px;
    background: linear-gradient(90deg, #22374a 0, #22374a 800px, #444 960px, #444 1670px, #1a2a47 1756px, #1a2a47 100%);
    display: flex;
    color: #fff;
}

.tb-start {
    width: 60px;
    display: flex;
    align-items: center;
    justify-content: center;
}

.tb-search {
    width: 430px;
    background: #f2f2f2;
    border-bottom: 1px solid #ccc;
    display: flex;
    align-items: center;
    gap: 14px;
    padding-left: 15px;
    font-size: 18px;
    color: #333;
}

.tb-apps {
    display: flex;
}

.tb-app {
    width: 62px;
    height: 50px;
    position: relative;
    display: flex;
    align-items: center;
    justify-content: center;
}

.tb-app.line::after,
.tb-app.line-stack::after {
    content: "";
    position: absolute;
    left: 5px;
    right: 5px;
    bottom: 0;
    height: 3px;
    background: #76b9ed;
}

.tb-app.line-stack::after {
    background: linear-gradient(90deg, #76b9ed 80%, #4f86b3 80%);
}

.tb-active {
    background: #666;
}

.word-w {
    font-family: "Liberation Sans", sans-serif;
    font-size: 14px;
    font-weight: 700;
    fill: #fff;
}

.cp-disc {
    width: 17px;
    height: 28px;
    border-radius: 50%;
    background: #3c3c3c;
    border: 1px solid #777;
}

.cmd-box {
    width: 28px;
    height: 32px;
    background: #000;
    border: 1px solid #bbb;
    border-top: 4px solid #ddd;
    font-family: "Liberation Mono", monospace;
    font-size: 6px;
    line-height: 8px;
    color: #ddd;
    padding-left: 2px;
}

.tb-tray {
    position: absolute;
    right: 0;
    top: 0;
    height: 50px;
    display: flex;
    align-items: center;
}

.tb-tray > svg:nth-child(1) { margin-right: 22px; }
.tb-tray > svg:nth-child(2) { margin-right: 23px; }
.tb-tray > svg:nth-child(3) { margin-right: 24px; }
.tb-tray > svg:nth-child(4) { margin-right: 21px; }

.tb-lang {
    font-size: 14.5px;
    color: #eee;
    margin-right: 16px;
}

.tb-clock {
    display: flex;
    flex-direction: column;
    align-items: center;
    font-size: 14.5px;
    line-height: 24px;
    color: #eee;
    margin-right: 24px;
}

.tb-notif {
    position: relative;
    width: 38px;
    height: 50px;
    padding-top: 14px;
    margin-right: 12px;
}

.notif-count {
    position: absolute;
    left: 9px;
    top: 24px;
    width: 20px;
    height: 20px;
    border-radius: 50%;
    background: #333;
    border: 1px solid #ddd;
    font-size: 13px;
    line-height: 18px;
    text-align: center;
}
```
